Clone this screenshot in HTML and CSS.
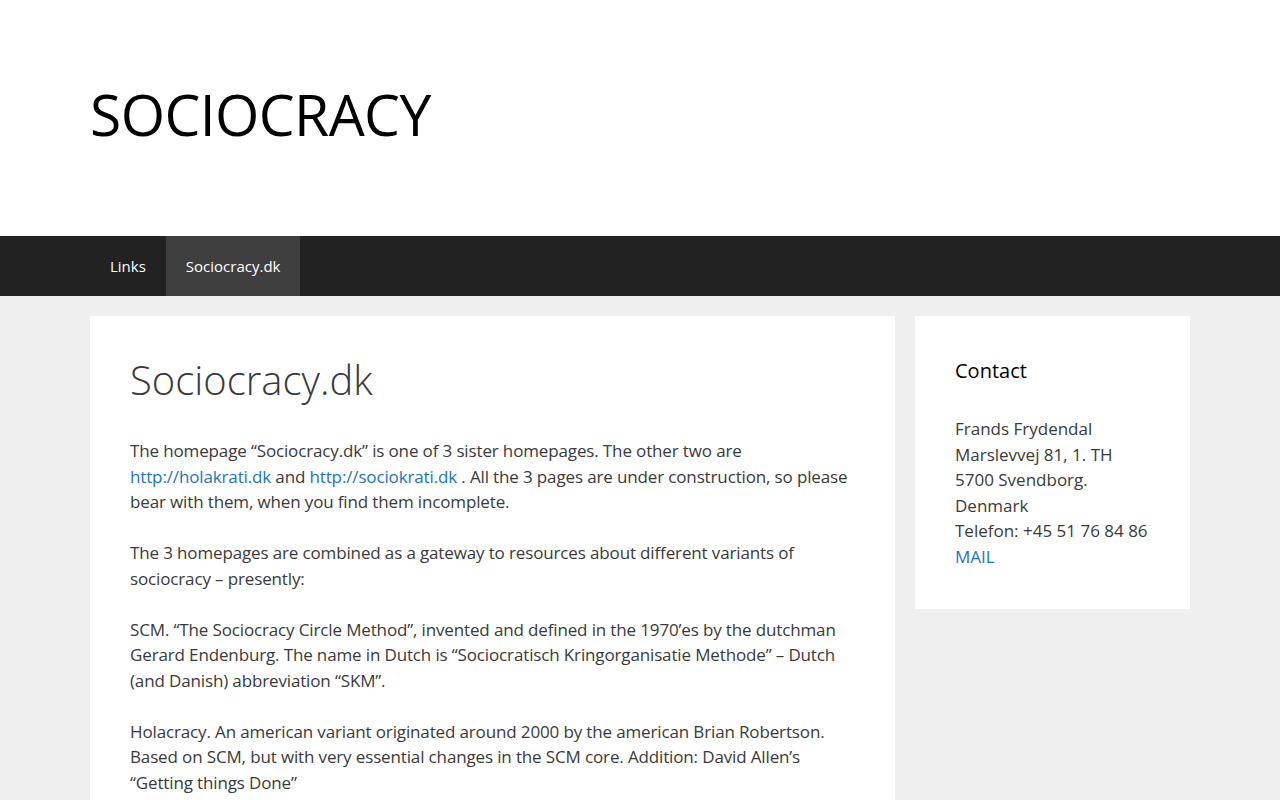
FILE: index.html
```html
<!DOCTYPE html>
<html lang="da">
  <head>
    <meta charset="UTF-8" />
    <meta name="viewport" content="width=device-width, initial-scale=1.0" />
    <title>Sociocracy.dk</title>
    <link rel="stylesheet" href="styles.css">
  </head>
  <body>
    <header class="site-header">
      <div class="inside-header">
        <a class="site-logo" href="#">SOCIOCRACY</a>
      </div>
    </header>
    <nav class="main-nav">
      <ul class="menu">
        <li><a href="#">Links</a></li>
        <li class="current"><a href="#">Sociocracy.dk</a></li>
      </ul>
    </nav>
    <div class="site-content">
      <main class="content-area">
        <article class="inside-article">
          <h1 class="entry-title">Sociocracy.dk</h1>
          <div class="entry-content">
            <p>
              The homepage “Sociocracy.dk” is one of 3 sister homepages. The other two are
              <a href="#">http://holakrati.dk</a> and <a href="#">http://sociokrati.dk</a> .
              All the 3 pages are under construction, so please bear with them, when you find them incomplete.
            </p>
            <p>
              The 3 homepages are combined as a gateway to resources about different variants of
              sociocracy – presently:
            </p>
            <p>
              SCM. “The Sociocracy Circle Method”, invented and defined in the 1970’es by the dutchman
              Gerard Endenburg. The name in Dutch is “Sociocratisch Kringorganisatie Methode” – Dutch
              (and Danish) abbreviation “SKM”.
            </p>
            <p>
              Holacracy. An american variant originated around 2000 by the american Brian Robertson.
              Based on SCM, but with very essential changes in the SCM core. Addition: David Allen’s
              “Getting things Done”
            </p>
          </div>
        </article>
      </main>
      <aside class="sidebar">
        <section class="widget">
          <h2 class="widget-title">Contact</h2>
          <div class="widget-text">
            Frands Frydendal<br />
            Marslevvej 81, 1. TH<br />
            5700 Svendborg.<br />
            Denmark<br />
            Telefon: +45 51 76 84 86<br />
            <a href="#">MAIL</a>
          </div>
        </section>
      </aside>
    </div>
  </body>
</html>
```

FILE: styles.css
```css
body {
  margin: 0;
  background-color: #efefef;
  color: #3a3a3a;
  font-family: "Open Sans", sans-serif;
  font-size: 17px;
  line-height: 1.5;
}

a {
  color: #1e73be;
  text-decoration: none;
}

.site-header {
  background-color: #ffffff;
}

.inside-header {
  width: 1100px;
  margin: 0 auto;
  height: 236px;
  display: flex;
  align-items: center;
}

.site-logo {
  color: #000000;
  font-size: 57px;
  line-height: 1;
  letter-spacing: -0.6px;
  margin-top: -7px;
}

.main-nav {
  background-color: #222222;
}

.menu {
  list-style: none;
  margin: 0 auto;
  padding: 0;
  width: 1100px;
  display: flex;
}

.menu a {
  display: block;
  padding: 0 20px;
  line-height: 60px;
  font-size: 15px;
  color: #ffffff;
}

.menu .current a {
  background-color: #3f3f3f;
}

.site-content {
  width: 1100px;
  margin: 20px auto 0;
  display: flex;
  gap: 20px;
  align-items: flex-start;
}

.content-area {
  width: 805px;
}

.inside-article {
  background-color: #ffffff;
  padding: 40px;
}

.entry-title {
  margin: 0;
  font-size: 40px;
  font-weight: 300;
  line-height: 1.2;
}

.entry-content {
  margin-top: 34px;
  letter-spacing: -0.14px;
}

.entry-content p {
  margin: 0 0 25.5px;
}

.sidebar {
  width: 275px;
}

.widget {
  background-color: #ffffff;
  padding: 40px;
}

.widget-title {
  margin: 0 0 30px;
  font-size: 20px;
  font-weight: 400;
  line-height: 1.5;
  color: #000000;
}
```
